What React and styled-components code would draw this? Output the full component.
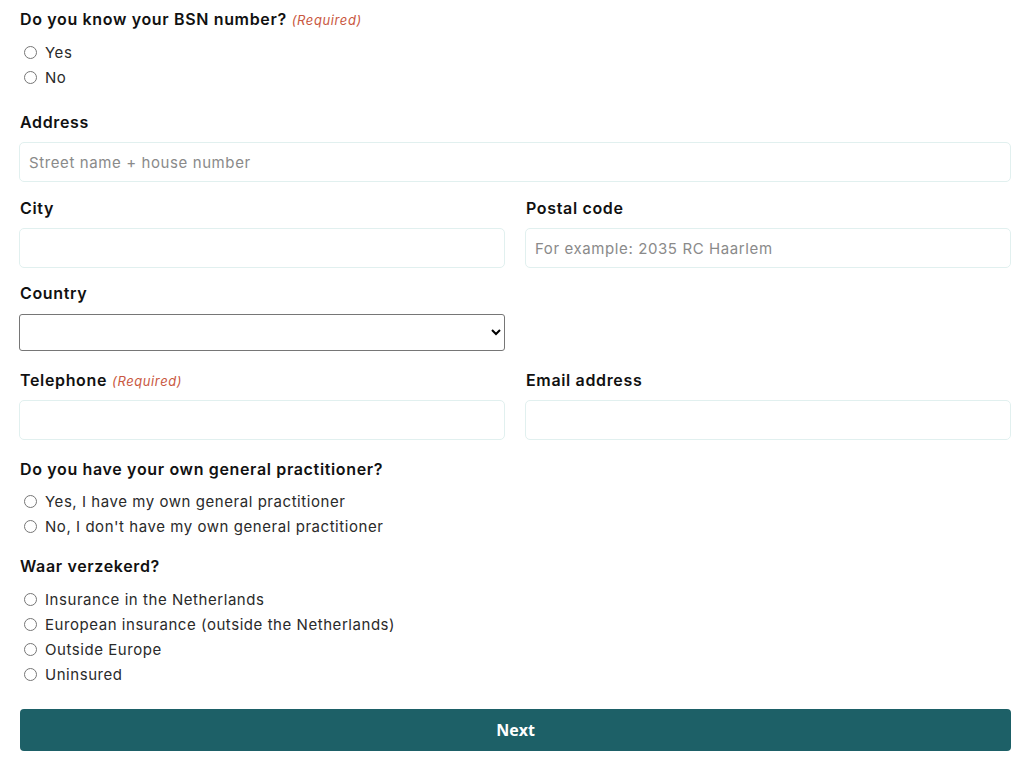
import styled, { createGlobalStyle } from "styled-components";

const GlobalStyle = createGlobalStyle`
  body {
    margin: 0;
    background: #fff;
    font-family: Inter, "Liberation Sans", sans-serif;
    color: #111;
  }
`;

const Form = styled.form`
  width: 992px;
  padding: 9px 13px 6px 19px;
`;

const Group = styled.fieldset`
  border: none;
  margin: 0 0 ${(p) => p.$mb || 0}px;
  padding: 0;
`;

const Legend = styled.legend`
  padding: 0 0 0 1px;
  font-size: 16px;
  font-weight: 600;
  letter-spacing: 0.65px;
  line-height: 20px;
  margin-bottom: ${(p) => p.$mb || 11}px;
`;

const Label = styled.label`
  display: block;
  padding-left: 1px;
  font-size: 16px;
  font-weight: 600;
  letter-spacing: 0.65px;
  line-height: 20px;
  margin-bottom: ${(p) => p.$mb || 10}px;
`;

const Required = styled.span`
  font-size: 13px;
  line-height: 1;
  font-weight: 400;
  font-style: italic;
  letter-spacing: 0.6px;
  color: #c9583f;
  margin-left: 5px;
`;

const Option = styled.label`
  display: flex;
  align-items: center;
  gap: 8px;
  height: 25px;
  padding-left: 5px;
  font-size: 15px;
  letter-spacing: 0.55px;
  color: #2a2a2a;
`;

const Radio = styled.input.attrs({ type: "radio" })`
  width: 13px;
  height: 13px;
  margin: 0;
  accent-color: #1d5f66;
`;

const Row = styled.div`
  display: grid;
  grid-template-columns: 1fr 1fr;
  column-gap: 20px;
  margin-bottom: ${(p) => p.$mb || 0}px;
`;

const Field = styled.div`
  margin-bottom: ${(p) => p.$mb || 0}px;
`;

const Input = styled.input`
  box-sizing: border-box;
  display: block;
  width: 100%;
  height: 40px;
  padding: 0 9px;
  border: 1px solid #e1f0ef;
  border-radius: 5px;
  font-family: inherit;
  font-size: 15px;
  letter-spacing: 0.6px;
  color: #222;
  background: #fff;

  &::placeholder {
    color: #8a8a8a;
  }
`;

const Select = styled.select`
  box-sizing: border-box;
  display: block;
  width: 100%;
  height: 37px;
  border: 1px solid #767676;
  border-radius: 3px;
  background: #fff;
  font-family: inherit;
  font-size: 15px;
`;

const Button = styled.button`
  display: block;
  width: 991px;
  height: 42px;
  margin-left: 1px;
  border: none;
  border-radius: 4px;
  background: #1d6067;
  color: #fff;
  font-family: "Open Sans", sans-serif;
  font-size: 16px;
  font-weight: 700;
  cursor: pointer;
`;

function RadioGroup({ name, options }) {
  return options.map((o) => (
    <Option key={o}>
      <Radio name={name} />
      {o}
    </Option>
  ));
}

export default function App() {
  return (
    <>
      <GlobalStyle />
      <Form onSubmit={(e) => e.preventDefault()}>
        <Group $mb={22}>
          <Legend>
            Do you know your BSN number?<Required>(Required)</Required>
          </Legend>
          <RadioGroup name="bsn" options={["Yes", "No"]} />
        </Group>

        <Field $mb={16}>
          <Label>Address</Label>
          <Input placeholder="Street name + house number" />
        </Field>

        <Row $mb={15}>
          <Field>
            <Label>City</Label>
            <Input />
          </Field>
          <Field>
            <Label>Postal code</Label>
            <Input placeholder="For example: 2035 RC Haarlem" />
          </Field>
        </Row>

        <Row $mb={19}>
          <Field>
            <Label $mb={11}>Country</Label>
            <Select>
              <option></option>
            </Select>
          </Field>
        </Row>

        <Row $mb={19}>
          <Field>
            <Label>
              Telephone<Required>(Required)</Required>
            </Label>
            <Input type="tel" />
          </Field>
          <Field>
            <Label>Email address</Label>
            <Input type="email" />
          </Field>
        </Row>

        <Group $mb={17}>
          <Legend $mb={10}>Do you have your own general practitioner?</Legend>
          <RadioGroup
            name="gp"
            options={[
              "Yes, I have my own general practitioner",
              "No, I don't have my own general practitioner",
            ]}
          />
        </Group>

        <Group $mb={22}>
          <Legend>Waar verzekerd?</Legend>
          <RadioGroup
            name="insurance"
            options={[
              "Insurance in the Netherlands",
              "European insurance (outside the Netherlands)",
              "Outside Europe",
              "Uninsured",
            ]}
          />
        </Group>

        <Button type="submit">Next</Button>
      </Form>
    </>
  );
}
